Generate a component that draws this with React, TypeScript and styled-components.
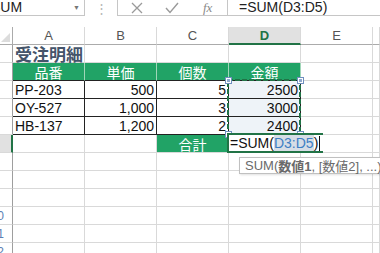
import styled, { createGlobalStyle } from "styled-components";

const GlobalStyle = createGlobalStyle`
  body {
    margin: 0;
    overflow: hidden;
    background: #fff;
    font-family: "Liberation Sans", "Noto Sans CJK JP", sans-serif;
  }
`;

const GREEN = "#217346";
const FILL = "#21a366";
const GRID = "#d9d9d9";

type Row = {
  num: number;
  cells: { text?: string; kind?: "title" | "head" | "data" | "range" | "total"; align?: "left" | "right" | "center" }[];
};

const rows: Row[] = [
  { num: 1, cells: [{ text: "受注明細", kind: "title" }] },
  {
    num: 2,
    cells: [
      { text: "品番", kind: "head" },
      { text: "単価", kind: "head" },
      { text: "個数", kind: "head" },
      { text: "金額", kind: "head" },
    ],
  },
  {
    num: 3,
    cells: [
      { text: "PP-203", kind: "data" },
      { text: "500", kind: "data", align: "right" },
      { text: "5", kind: "data", align: "right" },
      { text: "2500", kind: "range", align: "right" },
    ],
  },
  {
    num: 4,
    cells: [
      { text: "OY-527", kind: "data" },
      { text: "1,000", kind: "data", align: "right" },
      { text: "3", kind: "data", align: "right" },
      { text: "3000", kind: "range", align: "right" },
    ],
  },
  {
    num: 5,
    cells: [
      { text: "HB-137", kind: "data" },
      { text: "1,200", kind: "data", align: "right" },
      { text: "2", kind: "data", align: "right" },
      { text: "2400", kind: "range", align: "right" },
    ],
  },
  { num: 6, cells: [{}, {}, { text: "合計", kind: "total" }] },
  { num: 7, cells: [] },
  { num: 8, cells: [] },
  { num: 9, cells: [] },
  { num: 10, cells: [] },
  { num: 11, cells: [] },
  { num: 12, cells: [] },
];

const columns = ["A", "B", "C", "D", "E", ""];

export default function App() {
  return (
    <Page>
      <GlobalStyle />
      <FormulaBar>
        <NameBox>
          <span>SUM</span>
          <Caret>▼</Caret>
        </NameBox>
        <Grip>⋮</Grip>
        <ActionBox>
          <svg width="12" height="12" viewBox="0 0 12 12">
            <path d="M1 1 L11 11 M11 1 L1 11" stroke="#9a9a9a" strokeWidth="1.3" fill="none" />
          </svg>
          <svg width="14" height="12" viewBox="0 0 14 12">
            <path d="M1 6 L5 10.5 L13 1" stroke="#9a9a9a" strokeWidth="1.4" fill="none" />
          </svg>
          <Fx>fx</Fx>
        </ActionBox>
        <FormulaInput>=SUM(D3:D5)</FormulaInput>
      </FormulaBar>

      <Sheet>
        <Grid>
          <Corner>
            <svg width="9" height="9" viewBox="0 0 9 9">
              <path d="M9 0 L9 9 L0 9 Z" fill="#dcdcdc" />
            </svg>
          </Corner>
          {columns.map((c) => (
            <ColHead key={c || "f"} $active={c === "D"}>
              {c}
            </ColHead>
          ))}
          {rows.map((r) => (
            <Line key={r.num} row={r} />
          ))}
        </Grid>

        <Ants width="76" height="58" viewBox="0 0 76 58">
          <rect x="2" y="2" width="72" height="54" fill="none" stroke={GREEN} strokeWidth="2" strokeDasharray="5 2" />
        </Ants>
        <Handle $x={226} $y={51} />
        <Handle $x={298} $y={51} />
        <Handle $x={226} $y={105} />
        <Handle $x={298} $y={105} />

        <EditCell>
          =SUM(<RefText>D3:D5</RefText>)<Cursor />
        </EditCell>

        <Tip>
          SUM(<b>数値1</b>, [数値2], ...)
        </Tip>
      </Sheet>
    </Page>
  );
}

function Line({ row }: { row: Row }) {
  return (
    <>
      <RowHead $active={row.num === 6}>
        <span>{row.num >= 10 ? row.num : ""}</span>
      </RowHead>
      {columns.map((_, i) => {
        const cell = row.cells[i] || {};
        return (
          <Cell key={i} $kind={cell.kind} $align={cell.align || (cell.kind === "head" || cell.kind === "total" ? "center" : "left")}>
            {cell.text}
          </Cell>
        );
      })}
    </>
  );
}

const Page = styled.div`
  width: 380px;
  height: 253px;
  overflow: hidden;
  background: #fff;
`;

const FormulaBar = styled.div`
  display: flex;
  align-items: stretch;
  height: 16px;
  margin-bottom: 11px;
`;

const NameBox = styled.div`
  display: flex;
  flex-shrink: 0;
  align-items: center;
  justify-content: space-between;
  box-sizing: border-box;
  margin-left: -13px;
  width: 98px;
  padding: 0 4px 1px 3px;
  border: 1px solid #c6c6c6;
  border-top: none;
  font-size: 14px;
  color: #222;
`;

const Caret = styled.span`
  font-size: 7px;
  color: #777;
`;

const Grip = styled.div`
  width: 32px;
  display: flex;
  align-items: center;
  justify-content: center;
  color: #b5b5b5;
  font-size: 13px;
`;

const ActionBox = styled.div`
  display: flex;
  align-items: center;
  gap: 22px;
  box-sizing: border-box;
  width: 110px;
  padding-left: 13px;
  border: 1px solid #c6c6c6;
  border-top: none;
  border-right: none;
`;

const Fx = styled.span`
  font-family: "Liberation Serif", serif;
  font-style: italic;
  font-size: 13px;
  color: #8a8a8a;
  margin-left: 2px;
`;

const FormulaInput = styled.div`
  flex: 1;
  box-sizing: border-box;
  padding: 0 0 1px 11px;
  border: 1px solid #c6c6c6;
  border-top: none;
  border-right: none;
  font-size: 14px;
  line-height: 15px;
  color: #222;
`;

const Sheet = styled.div`
  position: relative;
`;

const Grid = styled.div`
  display: grid;
  grid-template-columns: 13px repeat(5, 72px) 1fr;
  grid-auto-rows: 18px;
`;

const Corner = styled.div`
  display: flex;
  align-items: flex-end;
  justify-content: flex-end;
  padding: 0 2px 2px 0;
  border-right: 1px solid #ababab;
  border-bottom: 1px solid #ababab;
`;

const ColHead = styled.div<{ $active?: boolean }>`
  display: flex;
  align-items: center;
  justify-content: center;
  box-sizing: border-box;
  background: ${(p) => (p.$active ? "#e1e1e1" : "#fff")};
  border-right: 1px solid ${GRID};
  border-bottom: ${(p) => (p.$active ? `2px solid ${GREEN}` : "1px solid #ababab")};
  color: ${(p) => (p.$active ? GREEN : "#555")};
  font-weight: ${(p) => (p.$active ? "bold" : "normal")};
  font-size: 13px;
`;

const RowHead = styled.div<{ $active?: boolean }>`
  display: flex;
  align-items: center;
  justify-content: flex-end;
  overflow: hidden;
  box-sizing: border-box;
  padding-right: 8px;
  background: ${(p) => (p.$active ? "#e1e1e1" : "#fff")};
  border-right: ${(p) => (p.$active ? `2px solid ${GREEN}` : "1px solid #9e9e9e")};
  border-bottom: 1px solid ${GRID};
  color: #5b7fb5;
  font-size: 12px;
  white-space: nowrap;
`;

type Kind = "title" | "head" | "data" | "range" | "total" | undefined;

const bgFor = (k: Kind) => {
  if (k === "head" || k === "total") return FILL;
  if (k === "range") return "#eef3f8";
  return "#fff";
};

const Cell = styled.div<{ $kind: Kind; $align: "left" | "right" | "center" }>`
  display: flex;
  align-items: center;
  justify-content: ${(p) => (p.$align === "right" ? "flex-end" : p.$align === "center" ? "center" : "flex-start")};
  box-sizing: border-box;
  padding: 0 2px 0 2px;
  white-space: nowrap;
  overflow: ${(p) => (p.$kind === "title" ? "visible" : "hidden")};
  background: ${(p) => bgFor(p.$kind)};
  border-right: 1px solid
    ${(p) => (p.$kind === "head" ? "#9fd6b8" : p.$kind === "data" || p.$kind === "range" ? "#222" : GRID)};
  border-bottom: 1px solid
    ${(p) => (p.$kind === "head" || p.$kind === "data" || p.$kind === "range" ? "#222" : GRID)};
  color: ${(p) => (p.$kind === "head" || p.$kind === "total" ? "#fff" : p.$kind === "title" ? "#44546a" : "#111")};
  font-size: ${(p) => (p.$kind === "title" ? "17px" : "14px")};
  font-weight: ${(p) => (p.$kind === "title" ? "bold" : "normal")};
`;

const Ants = styled.svg`
  position: absolute;
  left: 226px;
  top: 51px;
`;

const Handle = styled.div<{ $x: number; $y: number }>`
  position: absolute;
  left: ${(p) => p.$x}px;
  top: ${(p) => p.$y}px;
  width: 5px;
  height: 5px;
  box-sizing: border-box;
  background: #8ea9cf;
  border: 1px solid #fff;
  outline: 1px solid #6f8fbf;
`;

const EditCell = styled.div`
  position: absolute;
  left: 227px;
  top: 106px;
  height: 20px;
  box-sizing: border-box;
  display: flex;
  align-items: center;
  padding: 0 3px 0 1px;
  background: #fff;
  border: 2px solid ${GREEN};
  border-right: none;
  font-size: 14px;
  color: #111;
  white-space: nowrap;
`;

const RefText = styled.span`
  background: #d6dde6;
  color: #3d7fc4;
`;

const Cursor = styled.span`
  display: inline-block;
  width: 1px;
  height: 15px;
  background: #111;
  margin-left: 1px;
`;

const Tip = styled.div`
  position: absolute;
  left: 239px;
  top: 130px;
  height: 17px;
  box-sizing: border-box;
  display: flex;
  align-items: center;
  padding: 0 5px;
  border: 1px solid #c0c0c0;
  background: #fff;
  color: #6a6a6a;
  font-size: 13px;
  white-space: nowrap;
  box-shadow: 1px 1px 2px rgba(0, 0, 0, 0.12);

  b {
    font-weight: bold;
    color: #6a6a6a;
  }
`;
